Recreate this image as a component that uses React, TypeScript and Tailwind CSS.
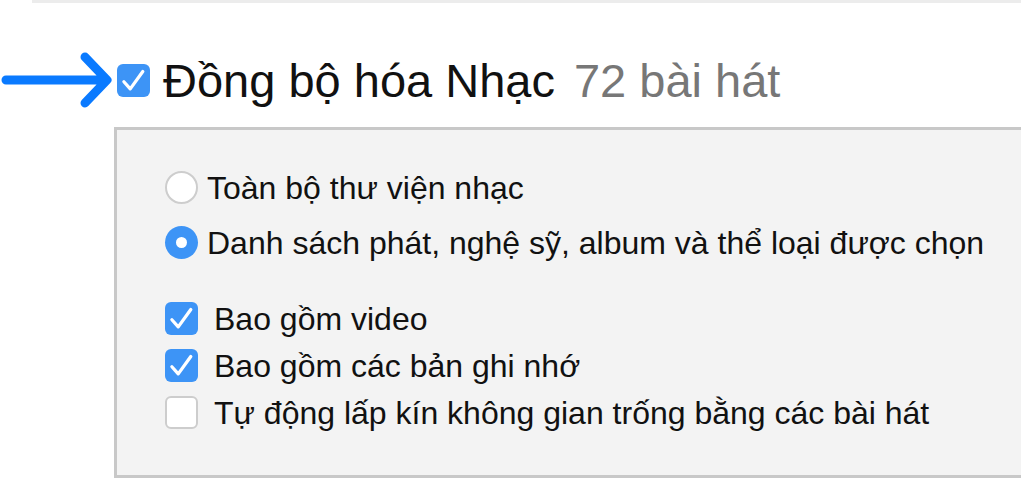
import React from "react";

const Check = ({ size = 20 }: { size?: number }) => (
  <svg width={size} height={size} viewBox="0 0 20 20" fill="none">
    <path d="M3.8 10.8 L7.9 15.4 L16 4.2" stroke="white" strokeWidth="2.1" strokeLinecap="round" strokeLinejoin="round" />
  </svg>
);

const CheckBox = ({ checked }: { checked: boolean }) =>
  checked ? (
    <div className="w-[33px] h-[33px] rounded-[6px] bg-[#3d94f6] flex items-center justify-center shrink-0">
      <Check size={31} />
    </div>
  ) : (
    <div className="w-[33px] h-[33px] rounded-[6px] bg-white border-2 border-[#cdcdcd] shrink-0" />
  );

const Radio = ({ checked }: { checked: boolean }) =>
  checked ? (
    <div className="w-[33px] h-[33px] rounded-full bg-[#3d94f6] flex items-center justify-center shrink-0">
      <div className="w-[11px] h-[11px] rounded-full bg-white" />
    </div>
  ) : (
    <div className="w-[33px] h-[33px] rounded-full bg-white border-2 border-[#cdcdcd] shrink-0" />
  );

export default function App() {
  return (
    <div className="w-[1021px] h-[500px] bg-white overflow-hidden relative" style={{ fontFamily: '"Liberation Sans", Arial, sans-serif' }}>
      <div className="ml-[32px] h-[3px] bg-[#ececec]" />
      <div className="flex items-center mt-[59px] h-[36px]">
        <svg width="114" height="56" viewBox="0 0 114 56" className="shrink-0">
          <path d="M6 28 H106 M85 5 L107 28 L85 51" stroke="#0a7aff" strokeWidth="9" strokeLinecap="round" strokeLinejoin="round" fill="none" />
        </svg>
        <div className="ml-[3px]">
          <CheckBox checked />
        </div>
        <span className="ml-[13px] text-[47px] leading-none text-[#111]">Đồng bộ hóa Nhạc</span>
        <span className="ml-[19px] text-[47px] leading-none text-[#777]">72 bài hát</span>
      </div>
      <div className="ml-[114px] mt-[29px] h-[351px] bg-[#f3f3f3] border-[3px] border-r-0 border-[#c8c8c8] pl-[48px] pt-[41px] text-[32px] text-[#111]">
        <div className="flex items-center gap-[9px] h-[33px]">
          <Radio checked={false} />
          <span>Toàn bộ thư viện nhạc</span>
        </div>
        <div className="flex items-center gap-[9px] h-[33px] mt-[22px]">
          <Radio checked />
          <span>Danh sách phát, nghệ sỹ, album và thể loại được chọn</span>
        </div>
        <div className="flex items-center gap-[16px] h-[33px] mt-[43px]">
          <CheckBox checked />
          <span>Bao gồm video</span>
        </div>
        <div className="flex items-center gap-[16px] h-[33px] mt-[14px]">
          <CheckBox checked />
          <span>Bao gồm các bản ghi nhớ</span>
        </div>
        <div className="flex items-center gap-[16px] h-[33px] mt-[14px]">
          <CheckBox checked={false} />
          <span>Tự động lấp kín không gian trống bằng các bài hát</span>
        </div>
      </div>
    </div>
  );
}
